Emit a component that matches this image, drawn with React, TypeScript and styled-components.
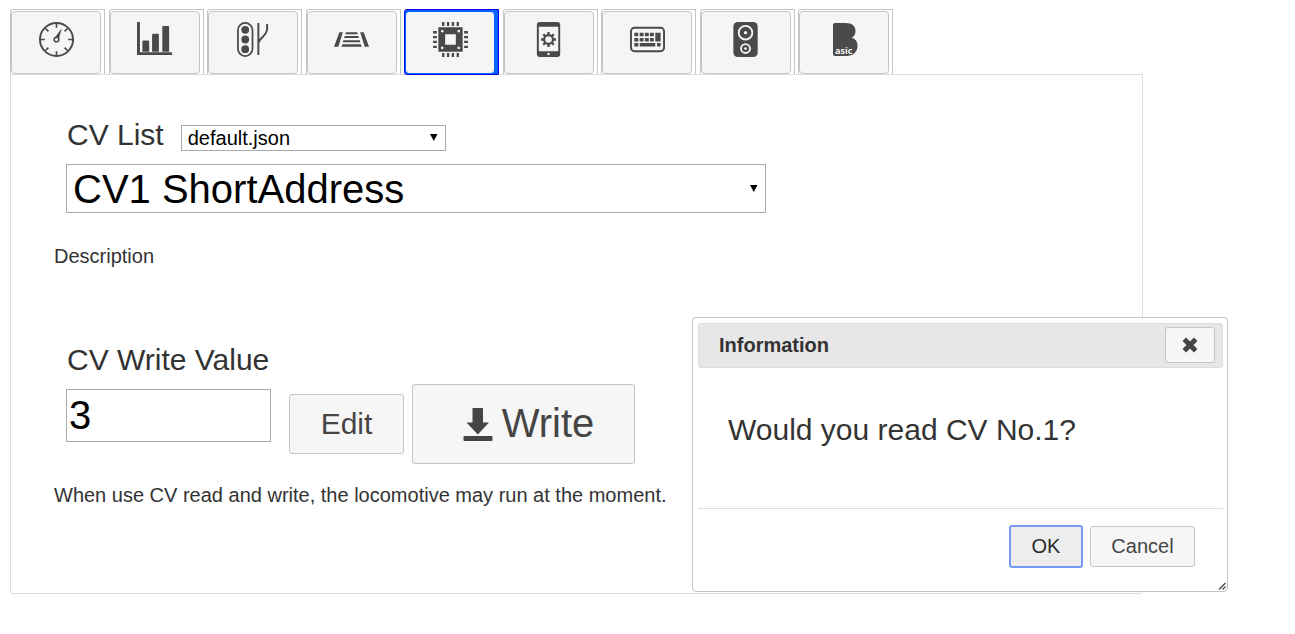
import React, { useState } from "react";
import styled, { createGlobalStyle, css } from "styled-components";

const GlobalStyle = createGlobalStyle`
  *, *::before, *::after { box-sizing: border-box; }
  body {
    margin: 0;
    background: #fff;
    color: #333;
    font-family: "Liberation Sans", Arial, sans-serif;
    font-size: 20px;
    line-height: 24px;
  }
  button, input, select { font-family: inherit; margin: 0; }
`;

const Page = styled.div`
  padding: 9px 152px 40px 10px;
`;

const TabBar = styled.nav`
  display: flex;
  justify-content: space-between;
  max-width: 883px;
`;

const Tab = styled.div<{ $active: boolean }>`
  flex: 0 0 95px;
  height: 65px;
  padding: 1px 3px 0 0;
  border: 1px solid #c5c5c5;
  border-bottom: 0;
  border-radius: 3px 0 0 0;
  ${(p) =>
    p.$active &&
    css`
      height: 66px;
      margin-bottom: -1px;
      border: 1px solid #1000f0;
      border-radius: 3px 0 0 3px;
      background: #0062ff;
      position: relative;
    `}
`;

const TabButton = styled.button<{ $active: boolean }>`
  display: flex;
  justify-content: center;
  width: 100%;
  height: 63px;
  padding: 10px 0 0 1px;
  border: 1px solid ${(p) => (p.$active ? "#0062ff" : "#c5c5c5")};
  border-radius: 4px;
  background: #f5f5f5;
  color: #4a4a4a;
  outline: none;
  svg { width: 35px; height: 35px; display: block; overflow: visible; }
`;

const Panel = styled.main`
  min-height: 520px;
  padding: 41px 43px 40px;
  border: 1px solid #ddd;
  border-radius: 0 0 3px 3px;
`;

const Section = styled.section`
  padding-left: 12px;
`;

const ListRow = styled.div`
  display: flex;
  align-items: baseline;
  gap: 17px;
`;

const FieldLabel = styled.label`
  display: block;
  padding-left: 1px;
  font-size: 30px;
  line-height: 38px;
`;

const SelectBox = styled.div<{ $large?: boolean }>`
  display: flex;
  position: relative;
  width: ${(p) => (p.$large ? "700px" : "265px")};
  max-width: 100%;
  margin-top: ${(p) => (p.$large ? "10px" : "0")};
  svg {
    position: absolute;
    right: 8px;
    top: calc(50% - 4px);
    width: 8px;
    height: 7px;
    pointer-events: none;
  }
`;

const Select = styled.select<{ $large?: boolean }>`
  appearance: none;
  width: 100%;
  height: ${(p) => (p.$large ? "49px" : "26px")};
  padding: 0 24px 0 6px;
  border: 1px solid #a9a9a9;
  border-radius: 0;
  background: #fff;
  color: #000;
  font-size: ${(p) => (p.$large ? "40px" : "20px")};
`;

const Note = styled.p`
  margin: 0;
`;

const Description = styled(Note)`
  margin: 31px 0 73px;
`;

const WriteRow = styled.div`
  display: flex;
  align-items: center;
  margin: 5px 0 19px;
`;

const ValueInput = styled.input`
  width: 205px;
  height: 53px;
  margin: 0 18px 18px 0;
  padding: 0 2px;
  border: 1px solid #a9a9a9;
  color: #000;
  font-size: 40px;
`;

const Button = styled.button<{ $size: "small" | "medium" | "large"; $focused?: boolean }>`
  display: flex;
  align-items: center;
  justify-content: center;
  border: 1px solid #c5c5c5;
  border-radius: 3px;
  background: #f6f6f6;
  color: #454545;
  padding: 0;
  ${(p) => p.$size === "small" && css`height: 41px; width: 105px; font-size: 20px;`}
  ${(p) => p.$size === "medium" && css`height: 60px; width: 115px; font-size: 30px; margin-right: 8px;`}
  ${(p) => p.$size === "large" && css`height: 80px; width: 223px; font-size: 40px; gap: 9px; padding: 0 0 2px 10px;`}
  ${(p) =>
    p.$focused &&
    css`
      width: 74px;
      height: 43px;
      border: 2px solid #769bf5;
      background: #ededed;
      color: #2b2b2b;
    `}
`;

const Dialog = styled.div`
  position: absolute;
  left: 692px;
  top: 317px;
  width: 536px;
  padding: 5px 4px 4px 5px;
  border: 1px solid #c5c5c5;
  border-radius: 4px;
  background: #fff;
`;

const TitleBar = styled.header`
  display: flex;
  align-items: center;
  justify-content: space-between;
  height: 45px;
  padding: 0 7px 2px 20px;
  border: 1px solid #ddd;
  border-radius: 3px;
  background: #e7e7e7;
`;

const Title = styled.h2`
  margin: 0;
  font-size: 20px;
  line-height: 24px;
`;

const CloseButton = styled.button`
  display: grid;
  place-items: center;
  width: 50px;
  height: 36px;
  padding: 0;
  border: 1px solid #c5c5c5;
  border-radius: 3px;
  background: #f6f6f6;
  color: #454545;
`;

const Message = styled.p`
  margin: 0;
  padding: 43px 30px 59px;
  font-size: 30px;
  line-height: 38px;
`;

const ButtonPane = styled.footer`
  display: flex;
  align-items: center;
  justify-content: flex-end;
  gap: 7px;
  padding: 16px 28px 19px 0;
  border-top: 1px solid #ddd;
`;

const ResizeGrip = styled.svg`
  position: absolute;
  right: 1px;
  bottom: 1px;
  width: 8px;
  height: 8px;
`;

const Arrow = () => (
  <svg viewBox="0 0 8 7" aria-hidden="true">
    <path d="M0 0H7.5L3.8 7Z" fill="#000" />
  </svg>
);

const Gauge = () => (
  <svg viewBox="0 0 36 36" fill="none" stroke="currentColor">
    <circle cx="18" cy="18" r="17" strokeWidth="2" />
    <path
      strokeWidth="1.7"
      d="M18 2v4M18 30v4M2 18h4M30 18h4M6.7 6.7l3 3M26.3 26.3l3 3M6.7 29.3l3-3M26.3 9.7l3-3"
    />
    <circle cx="18" cy="18" r="2.4" strokeWidth="1.6" />
    <path d="M16.8 15.3L23.4 6.3L20.6 16.6Z" fill="currentColor" stroke="none" />
  </svg>
);

const Chart = () => (
  <svg viewBox="1 0 36 36" fill="currentColor">
    <path d="M0 0h3v31h33v3H0zM5.5 20q0-1 1-1h5q1 0 1 1v10.5h-7zM15.5 13q0-1 1-1h5q1 0 1 1v17.5h-7zM26 5q0-1 1-1h5q1 0 1 1v25.5h-7z" />
  </svg>
);

const Signal = () => (
  <svg viewBox="1 0 36 36" fill="none" stroke="currentColor">
    <rect x="3" y="1" width="15" height="34" rx="7.5" strokeWidth="1.8" />
    <g fill="currentColor" stroke="none">
      <circle cx="10.5" cy="8" r="4" />
      <circle cx="10.5" cy="18" r="4" />
      <circle cx="10.5" cy="28" r="4" />
    </g>
    <path strokeWidth="2" d="M24 1v33M24 22.5C24 16.5 33 14.5 33 7V2" />
  </svg>
);

const Track = () => (
  <svg viewBox="1 0 36 36" fill="currentColor">
    <path d="M5.5 10.5h3.6L4.4 25.5H0zM26.9 10.5h3.6L36 25.5h-4.4zM12.2 10.5h11.6l.6 2H11.6zM11 14.5h14l.6 2H10.4zM9.6 18.7h16.8l.6 2H9zM8.6 22.8h19l.8 2.7H7.6z" />
  </svg>
);

const Chip = () => (
  <svg viewBox="0 0 36 36" fill="currentColor">
    <path
      fillRule="evenodd"
      d="M5.5 5.5h25v25h-25zM12.5 12.5v11h11v-11zM9.5 8a1.4 1.4 0 1 0 .01 0zM26.5 8a1.4 1.4 0 1 0 .01 0zM9.5 25.2a1.4 1.4 0 1 0 .01 0zM26.5 25.2a1.4 1.4 0 1 0 .01 0z"
    />
    <path
      stroke="currentColor"
      strokeWidth="2.4"
      d="M10.5 0v4M15.5 0v4M20.5 0v4M25.5 0v4M10.5 32v4M15.5 32v4M20.5 32v4M25.5 32v4M0 10.5h4M0 15.5h4M0 20.5h4M0 25.5h4M32 10.5h4M32 15.5h4M32 20.5h4M32 25.5h4"
    />
  </svg>
);

const Phone = () => (
  <svg viewBox="1 0 36 36" fill="currentColor">
    <path
      fillRule="evenodd"
      d="M9 0h18q3 0 3 3v30q0 3-3 3H9q-3 0-3-3V3q0-3 3-3zM8 5v25h20V5zM18 31.5a1.3 1.3 0 1 0 .01 0z"
    />
    <g fill="none" stroke="currentColor">
      <circle cx="18" cy="18" r="4.5" strokeWidth="2.2" />
      <path
        strokeWidth="2.4"
        d="M18 10.3v3M18 22.7v3M10.3 18h3M22.7 18h3M12.6 12.6l2 2M21.4 21.4l2 2M12.6 23.4l2-2M21.4 14.6l2-2"
      />
    </g>
  </svg>
);

const Keyboard = () => (
  <svg viewBox="0 0 36 36" fill="currentColor">
    <rect x="1" y="6" width="34" height="24" rx="3.5" fill="none" stroke="currentColor" strokeWidth="2" />
    <path d="M4.5 11h4v3.6h-4zM10 11h4v3.6h-4zM15.3 11h4v3.6h-4zM20.5 11h4v3.6h-4zM26 11h5.5v9H26zM4.5 16.4h4V20h-4zM10 16.4h4V20h-4zM15.3 16.4h4V20h-4zM20.5 16.4h4V20h-4zM4.5 21.7h4v3.6h-4zM10 21.7h16v3.6H10zM27.8 21.7h3.7v3.6h-3.7z" />
  </svg>
);

const Speaker = () => (
  <svg viewBox="1 0 36 36">
    <rect x="5.5" width="25" height="36" rx="4.5" fill="currentColor" />
    <g fill="none" stroke="#f5f5f5" strokeWidth="1.9">
      <circle cx="18" cy="11" r="7" />
      <circle cx="18" cy="27.3" r="4.6" />
    </g>
    <circle cx="18" cy="11" r="1.7" fill="#f5f5f5" />
    <circle cx="18" cy="27.3" r="1.4" fill="#f5f5f5" />
  </svg>
);

const Basic = () => (
  <svg viewBox="-1 0 35 35">
    <path
      fill="currentColor"
      d="M5 3q0-2 2-2h10.5c7 0 10 3.4 10 8 0 3.5-1.500 5.500-4 6.700 4.300 1 6 4 6 8 0 6.500-4.500 10.300-11 10.300H7q-2 0-2-2z"
    />
    <text x="7" y="32" fill="#f5f5f5" fontFamily="Open Sans, sans-serif" fontWeight="700" fontSize="9">
      asic
    </text>
  </svg>
);

const Download = () => (
  <svg width="30" height="35" viewBox="0 0 30 35" fill="currentColor" aria-hidden="true">
    <path d="M9.5 2h10.5v14.5H26L14.8 28.5 3.5 16.5h6z" />
    <rect x="0.5" y="30" width="29" height="5" rx="1" />
  </svg>
);

const Cross = () => (
  <svg width="18" height="18" viewBox="0 0 18 18" aria-hidden="true">
    <path d="M3.3 3.3l11.4 11.4M14.7 3.3L3.3 14.7" stroke="currentColor" strokeWidth="5" />
  </svg>
);

const tabs = [
  { name: "Throttle", Icon: Gauge },
  { name: "Statistics", Icon: Chart },
  { name: "Accessories", Icon: Signal },
  { name: "Layout", Icon: Track },
  { name: "CV", Icon: Chip },
  { name: "Device settings", Icon: Phone },
  { name: "Keyboard", Icon: Keyboard },
  { name: "Sound", Icon: Speaker },
  { name: "Script", Icon: Basic },
];

export default function App() {
  const [active, setActive] = useState("CV");
  const [value, setValue] = useState("3");
  const [open, setOpen] = useState(true);
  const close = () => setOpen(false);

  return (
    <>
      <GlobalStyle />
      <Page>
        <TabBar>
          {tabs.map(({ name, Icon }) => (
            <Tab key={name} $active={name === active}>
              <TabButton
                type="button"
                aria-label={name}
                $active={name === active}
                onClick={() => setActive(name)}
              >
                <Icon />
              </TabButton>
            </Tab>
          ))}
        </TabBar>
        <Panel>
          <Section>
            <ListRow>
              <FieldLabel htmlFor="cv-file">CV List</FieldLabel>
              <SelectBox>
                <Select id="cv-file">
                  <option>default.json</option>
                </Select>
                <Arrow />
              </SelectBox>
            </ListRow>
            <SelectBox $large>
              <Select $large aria-label="CV number">
                <option>CV1 ShortAddress</option>
              </Select>
              <Arrow />
            </SelectBox>
          </Section>
          <Description>Description</Description>
          <Section>
            <FieldLabel htmlFor="cv-value">CV Write Value</FieldLabel>
            <WriteRow>
              <ValueInput id="cv-value" value={value} onChange={(e) => setValue(e.target.value)} />
              <Button type="button" $size="medium">Edit</Button>
              <Button type="button" $size="large">
                <Download />
                Write
              </Button>
            </WriteRow>
          </Section>
          <Note>When use CV read and write, the locomotive may run at the moment.</Note>
        </Panel>
      </Page>
      {open && (
        <Dialog role="dialog" aria-labelledby="dialog-title">
          <TitleBar>
            <Title id="dialog-title">Information</Title>
            <CloseButton type="button" aria-label="Close" onClick={close}>
              <Cross />
            </CloseButton>
          </TitleBar>
          <Message>Would you read CV No.1?</Message>
          <ButtonPane>
            <Button type="button" $size="small" $focused onClick={close}>OK</Button>
            <Button type="button" $size="small" onClick={close}>Cancel</Button>
          </ButtonPane>
          <ResizeGrip viewBox="0 0 8 8" aria-hidden="true">
            <path d="M1 7.5L7.5 1M4.5 7.5L7.5 4.5" stroke="#444" strokeWidth="1.2" />
          </ResizeGrip>
        </Dialog>
      )}
    </>
  );
}
